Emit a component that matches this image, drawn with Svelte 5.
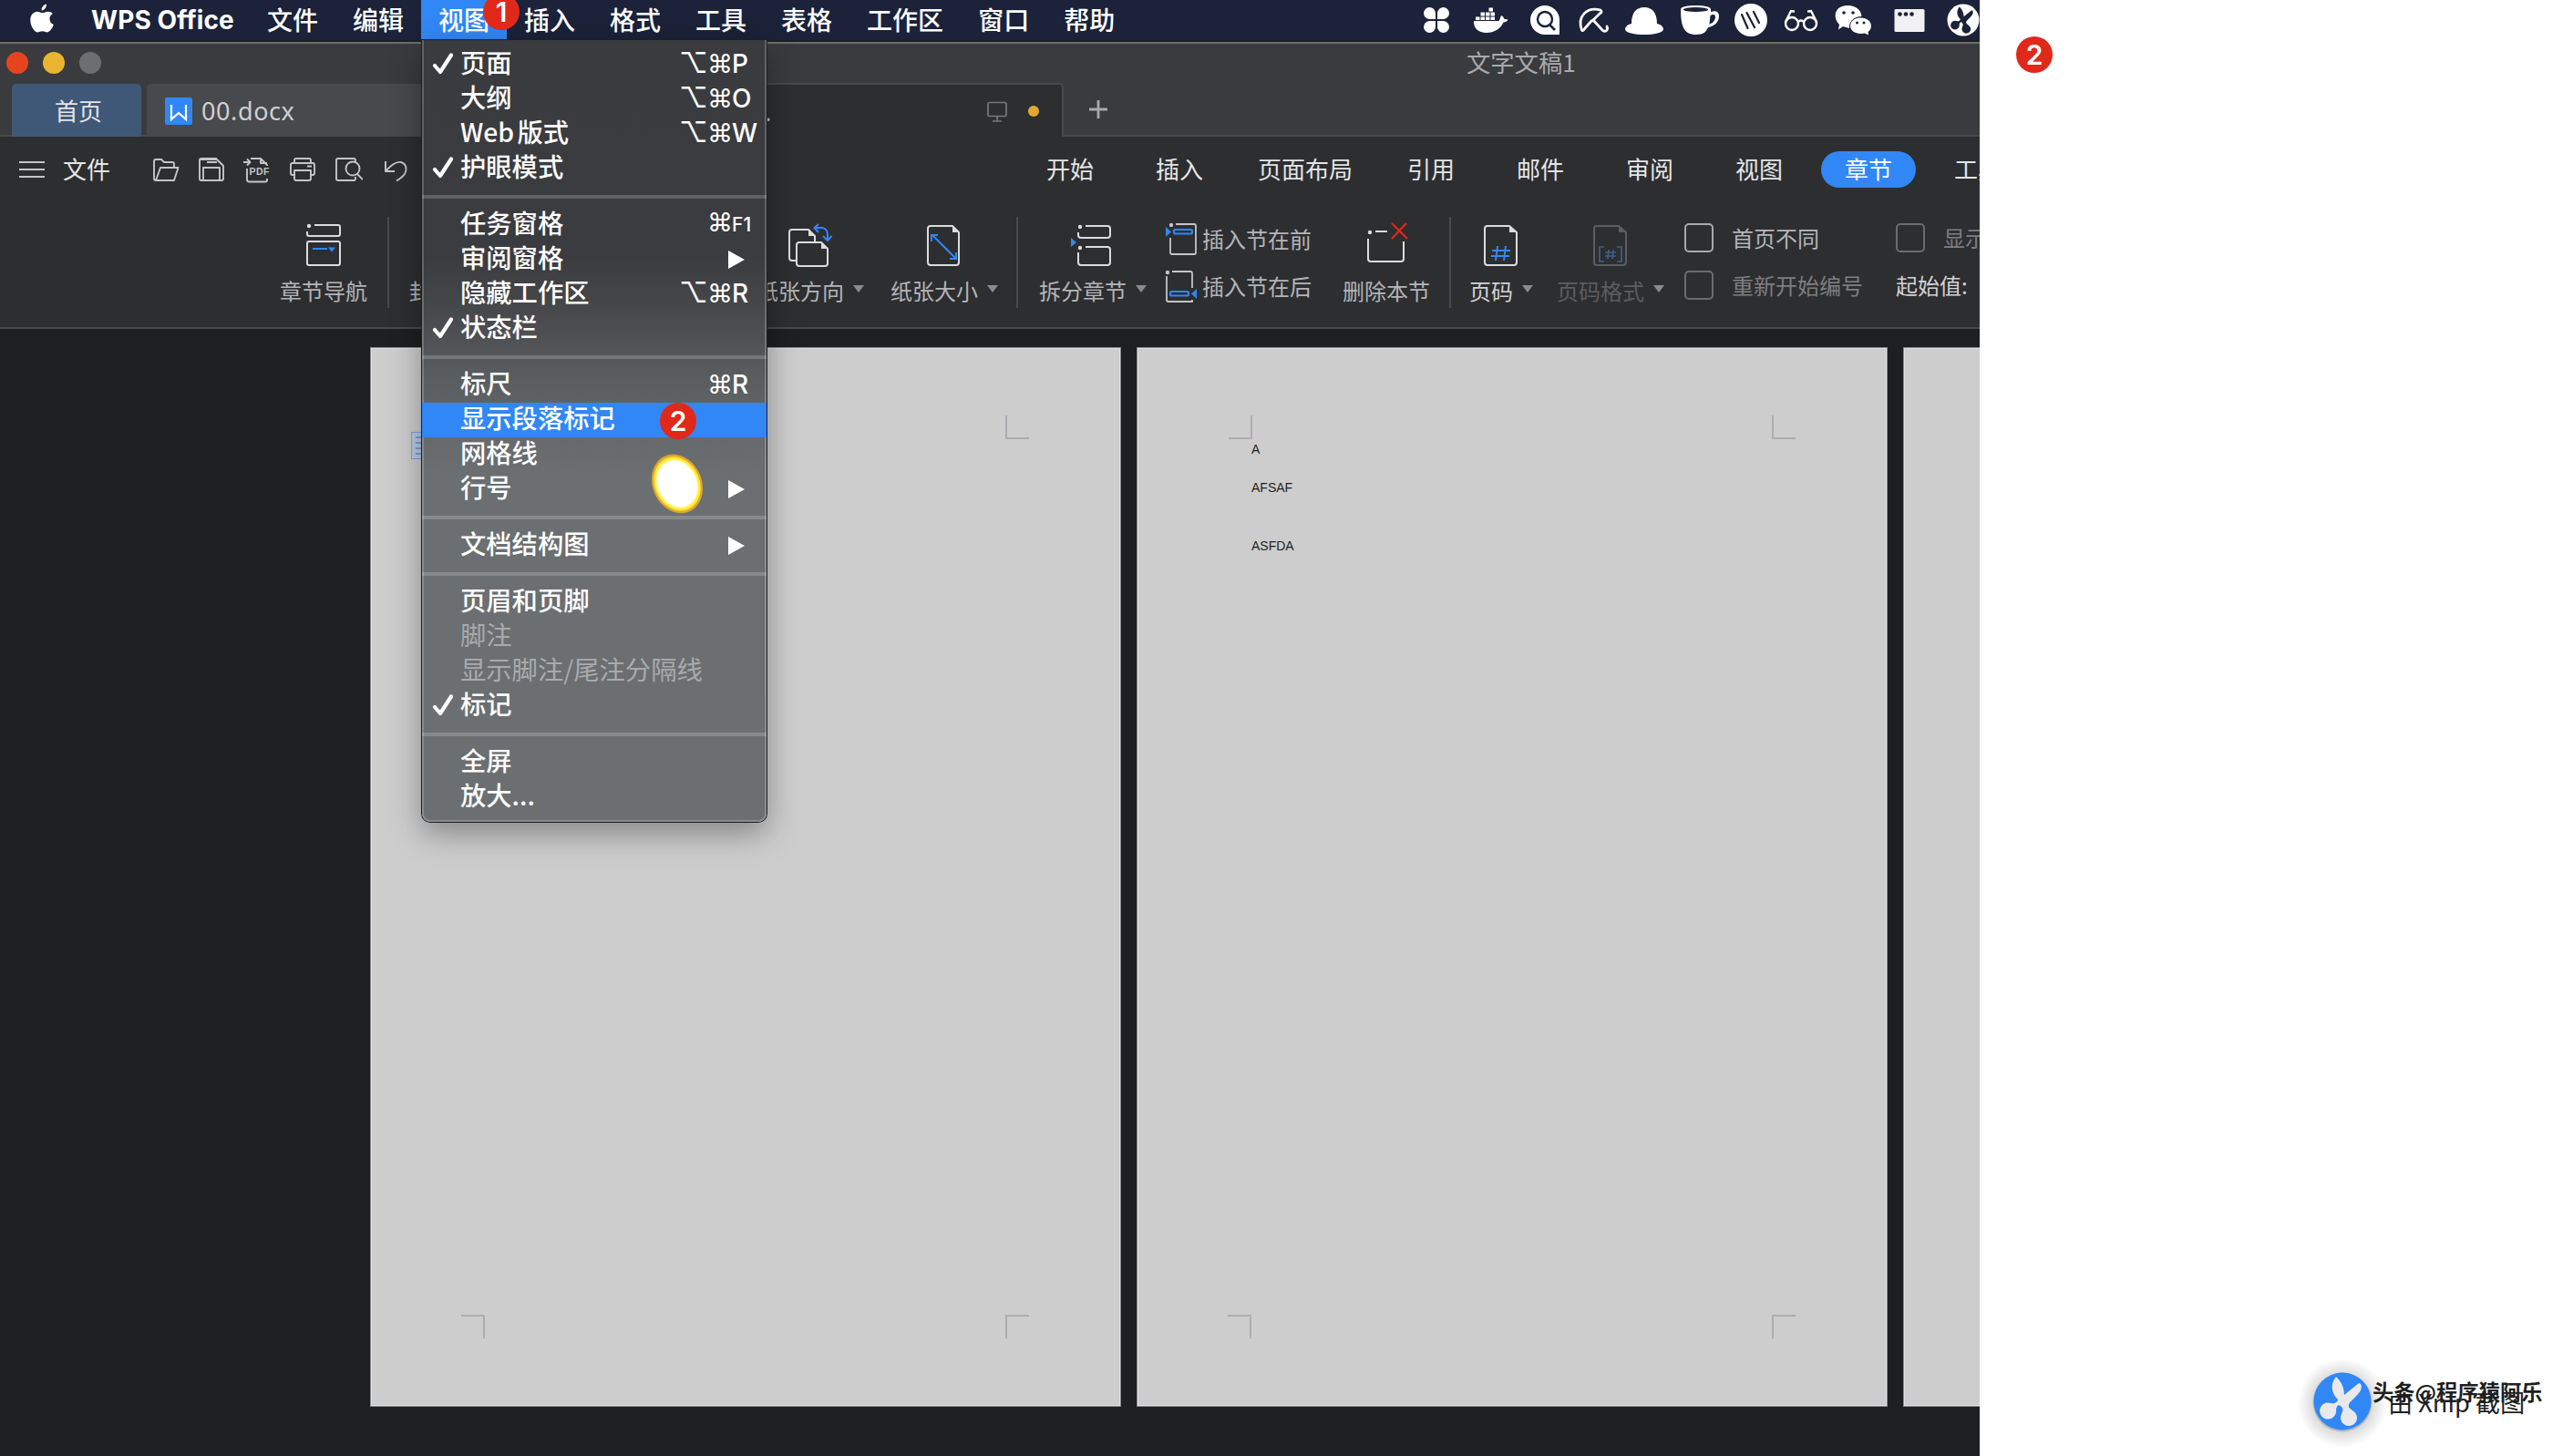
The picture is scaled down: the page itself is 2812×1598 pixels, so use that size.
<script>
  const menuTitles = ['文件', '编辑', '视图', '插入', '格式', '工具', '表格', '工作区', '窗口', '帮助'];

  const status = [
    { name: 'clover', gap: 0 },
    { name: 'docker', gap: 15.5 },
    { name: 'search', gap: 16 },
    { name: 'umbrella', gap: 10 },
    { name: 'hat', gap: 11 },
    { name: 'mug', gap: 17 },
    { name: 'stripes', gap: 12 },
    { name: 'glasses', gap: 11 },
    { name: 'chat', gap: 13 },
    { name: 'window', gap: 18 },
    { name: 'scissors', gap: 15 }
  ];

  const ribbonTabs = ['开始', '插入', '页面布局', '引用', '邮件', '审阅', '视图', '章节', '工具'];

  const menuGroups = [
    [
      { label: '页面', check: true, alt: true, key: 'P' },
      { label: '大纲', alt: true, key: 'O' },
      { label: 'Web 版式', web: true, alt: true, key: 'W' },
      { label: '护眼模式', check: true }
    ],
    [
      { label: '任务窗格', key: 'F1', small: true },
      { label: '审阅窗格', sub: true },
      { label: '隐藏工作区', alt: true, key: 'R' },
      { label: '状态栏', check: true }
    ],
    [
      { label: '标尺', key: 'R' },
      { label: '显示段落标记', active: true },
      { label: '网格线' },
      { label: '行号', sub: true }
    ],
    [{ label: '文档结构图', sub: true }],
    [
      { label: '页眉和页脚' },
      { label: '脚注', off: true },
      { label: '显示脚注/尾注分隔线', off: true },
      { label: '标记', check: true }
    ],
    [{ label: '全屏' }, { label: '放大...' }]
  ];
</script>

{#snippet scissorsShape()}
  <path d="M-7 -27 C-1 -22 2 -14 2 -7 L18 -20 C21 -20 23 -14 17 -8 C13 -3 7 1 7 4 C6 7 9 8 11 10 A9 9 0 1 1 -1 14 C1 10 1 7 -2 5 C-5 3 -6 5 -7 9 A9 9 0 1 1 -13 2 C-9 3 -5 1 -5 -2 C-12 -9 -14 -18 -7 -27 Z" />
{/snippet}

{#snippet statusIcon(name)}
  <svg class="status-icon" viewBox="0 0 44 44">
    {#if name === 'clover'}
      <path d="M21 21H14a6.5 6.5 0 1 1 7-7ZM23 21V14a6.5 6.5 0 1 1 7 7ZM21 23V30a6.5 6.5 0 1 1-7-7ZM23 23H30a6.5 6.5 0 1 1-7 7Z" fill="#fff" />
    {:else if name === 'docker'}
      <path d="M4 23H31.500C33 21 33 19 34 17c2 1 3 2 3.500 4 1.500-.3 3 0 4 .8-1 2-3 2.700-5 2.700C33 32 26 36 18 36 9 36 3.500 31 4 23Z" fill="#fff" />
      <path d="M6 18.500h4.500V22H6zM11.500 18.500H16V22h-4.500zM17 18.500h4.500V22H17zM22.500 18.500H27V22h-4.500zM11.500 13.500H16v4h-4.500zM17 13.500h4.500v4H17zM22.500 13.500H27v4h-4.500zM20.500 8.500H25v4h-4.500z" fill="#fff" />
    {:else if name === 'search'}
      <path d="M22 6a16 16 0 0 1 16 16V38H22A16 16 0 0 1 22 6Z" fill="#fff" />
      <circle cx="22" cy="21" r="8" fill="none" stroke="#1b2239" stroke-width="2.400" />
      <path d="M27 27L33 33" stroke="#1b2239" stroke-width="2.600" />
    {:else if name === 'umbrella'}
      <g fill="none" stroke="#fff" stroke-width="2.800" stroke-linejoin="round" stroke-linecap="round">
        <path d="M8.500 33C3 18 14 7 29 11C31 13 30 14 28 15L22 21Q21 23 19 23L12 31C10 34 9 34 8.500 33Z" />
        <path d="M21 22L31 33C34 36 38 33 36 29" />
      </g>
    {:else if name === 'hat'}
      <path d="M22 8C31 8 36 14 36 26C41 27 43 30 43 32C43 36 32 38 22 38C12 38 1 36 1 32C1 30 3 27 8 26C8 14 13 8 22 8Z" fill="#fff" />
    {:else if name === 'mug'}
      <path d="M1 10C1 4.500 34 4.500 34 10V13C41 11 43 14 43 18C43 24 38 29 31 30C29 35 26 38 18 38C4 38 1 28 1 10Z" fill="#fff" />
      <ellipse cx="17.500" cy="10.500" rx="13.500" ry="2.600" fill="#1b2239" />
      <path d="M33.500 17C38 14.500 40 17 38.500 21C37.500 24 35 26 32.500 26.500Z" fill="#1b2239" />
    {:else if name === 'stripes'}
      <circle cx="22" cy="22" r="18" fill="#fff" />
      <path d="M12 16L18.500 31M17.500 14L26 30M25 13L31 25" stroke="#1b2239" stroke-width="2.200" stroke-linecap="round" />
    {:else if name === 'glasses'}
      <g fill="none" stroke="#fff" stroke-width="2.400" stroke-linecap="round">
        <path d="M5 24L11 12L14 12.500M39 24L33 12L30 12.500M19.500 23.500Q22 21.500 24.500 23.500" />
        <circle cx="12" cy="26" r="7" /><circle cx="32" cy="26" r="7" />
      </g>
    {:else if name === 'chat'}
      <path d="M16 6C25 6 31 11 31.500 18C24 18 17 23 18 31L11 29L6 32.500L7 27C-1 19 2 6 16 6Z" fill="#fff" />
      <path d="M30 19.500C38 19.500 42 24 42 28.500C42 31.500 40.500 33.500 38.500 35L39 38.500L35 36.500C27 38 19 35 19 28.500C19 23.500 23.500 19.500 30 19.500Z" fill="#fff" />
      <circle cx="12" cy="14" r="1.800" fill="#1b2239" /><circle cx="22" cy="14" r="1.800" fill="#1b2239" />
      <circle cx="26.500" cy="25" r="1.500" fill="#1b2239" /><circle cx="34" cy="25" r="1.500" fill="#1b2239" />
    {:else if name === 'window'}
      <rect x="5.500" y="10" width="33" height="25" rx="1.500" fill="#f1f1f3" />
      <circle cx="11.500" cy="15.500" r="2.300" fill="#1b2239" /><circle cx="18" cy="15.500" r="2.300" fill="#1b2239" /><circle cx="24.500" cy="15.500" r="2.300" fill="#1b2239" />
    {:else}
      <circle cx="22" cy="22" r="17.500" fill="#fff" />
      <g transform="translate(21.500 22) scale(.54)" fill="#1b2239">{@render scissorsShape()}</g>
    {/if}
  </svg>
{/snippet}

{#snippet arrow()}
  <svg class="arrow" viewBox="0 0 12 8"><path d="M0 0H12L6 8Z" fill="#8a8b8e" /></svg>
{/snippet}

<div class="canvas">
  <div class="screen">
    <header class="menubar">
      <svg class="apple" viewBox="0 0 26 32"><path d="M18 0.500C18.300 4 15.500 7.500 12.600 7.600C12.300 4.200 15 1 18 .5ZM24.800 11C22.500 12.400 21.400 14.300 21.500 17C21.600 20 23.300 22 25.800 23.100C24.500 27 21.700 31.400 18.800 31.400C16.900 31.400 16 30.300 13.500 30.300C11 30.300 10 31.400 8.200 31.400C4.500 31.400 .3 24 .3 18.200C.3 12.200 4 8.800 7.800 8.800C10.300 8.800 11.800 10.200 13.600 10.200C15.300 10.200 17 8.700 19.900 8.700C21.900 8.700 23.700 9.500 24.800 11Z" fill="#fff" /></svg>
      <b class="app-name">WPS Office</b>
      <nav class="titles">
        {#each menuTitles as title}
          <span class="title" class:open={title === '视图'}>{title}</span>
        {/each}
      </nav>
      <div class="status">
        {#each status as s}
          <div style:margin-left="{s.gap}px">{@render statusIcon(s.name)}</div>
        {/each}
      </div>
    </header>

    <div class="titlebar">
      <div class="lights"><i class="red"></i><i class="yellow"></i><i class="grey"></i></div>
      <span class="doc-title">文字文稿1</span>
    </div>

    <div class="tabstrip">
      <div class="tab home">首页</div>
      <div class="tab file">
        <svg class="w-logo" viewBox="0 0 30 30"><rect width="30" height="30" rx="2" fill="#3187f5" /><path d="M7 8V24L15 17L23 24V8" fill="none" stroke="#fff" stroke-width="2.200" /></svg>
        <span>00.docx</span>
      </div>
      <div class="tab current">
        <span class="tail">.</span>
        <svg class="monitor" viewBox="0 0 24 24" fill="none" stroke="#77787b" stroke-width="1.700"><rect x="2" y="1.500" width="20" height="15" rx="1.500" /><path d="M12 17V22M7 22H17" /></svg>
        <i class="unsaved"></i>
      </div>
      <svg class="plus" viewBox="0 0 20 20"><path d="M10 0V20M0 10H20" stroke="#a9aaad" stroke-width="2.800" /></svg>
    </div>

    <div class="toolbar">
      <svg class="burger" viewBox="0 0 28 20"><path d="M0 2H28M0 10H28M0 18H28" stroke="#c4c5c7" stroke-width="1.800" /></svg>
      <span class="file-label">文件</span>
      <div class="quick">
        <svg viewBox="0 0 32 32"><path d="M5 28H25L29.500 14H10L5 28Q3 28 3 26V7Q3 5 5 5H11L14 8H23Q25 8 25 10V14" /></svg>
        <svg viewBox="0 0 32 32"><path d="M4 5H22L29 12V26Q29 28 27 28H5Q3 28 3 26V6Q3 4 5 4H22M7 28V14H25V28M11 8H22" /></svg>
        <svg viewBox="0 0 32 32"><path d="M1 8H8M5 4.500L8.500 8L5 11.500M9 4H20L27 11V12M20 4V9H27M5 15V27Q5 29.500 7.500 29.500H25Q27 29.500 27 27.500V26" /><text x="7.500" y="22" class="pdf">PDF</text></svg>
        <svg viewBox="0 0 32 32"><path d="M8 22H5Q3 22 3 20V11Q3 9 5 9H27Q29 9 29 11V20Q29 22 27 22H25M7 9V6Q7 4 9 4H23Q25 4 25 6V9M8 17H25V26Q25 28 23 28H9Q7 28 7 26V17ZM21 12.500H26" /></svg>
        <svg viewBox="0 0 32 32"><path d="M24 8V6Q24 4 22 4H5Q3 4 3 6V26Q3 28 5 28H22Q24 28 24 26V24M26 21L32 27" /><circle cx="21" cy="15" r="7.500" /></svg>
        <svg viewBox="0 0 32 32"><path d="M7 7V18H17M7 18C14 10 19 7 24 8C30 10 31 16 28 21C26 24 23 26 19 28.500" /></svg>
      </div>
      <nav class="rtabs">
        {#each ribbonTabs as t}
          <span class="rtab"><span class:pill={t === '章节'}>{t}</span></span>
        {/each}
      </nav>
    </div>

    <div class="ribbon">
      <div class="tool nav-tool">
        <svg class="icon" viewBox="0 0 52 52"><g class="line"><path d="M16 4H42Q44 4 44 6V14Q44 16 42 16H10Q8 16 8 14V11" /><rect x="8" y="22" width="36" height="26" rx="2" /></g><circle cx="10" cy="5" r="2.200" fill="#dcdcde" /><path d="M14 30H30M33 29.500h4l-2 2.500z" stroke="#3187f5" stroke-width="2" fill="#3187f5" /></svg>
        <div class="label">章节导航</div>
      </div>
      <i class="sep s1"></i>
      <div class="tool cover"><div class="icon"></div><div class="label">封面页</div></div>
      <div class="tool orient">
        <svg class="icon" viewBox="0 0 52 52"><g class="line"><path d="M11 43H6Q3 43 3 40V12Q3 9 6 9H24L31 16V22" /><path d="M14 23H38L45 30V46Q45 49 42 49H14Q11 49 11 46V26Q11 23 14 23Z" /></g><path d="M24 9V16H31ZM38 23V30H45Z" fill="#dcdcde" /><path d="M30 7H39Q45 8 45 15V20M35 3L30.500 7L35 12M40 16L45 21L49.500 16" fill="none" stroke="#3187f5" stroke-width="2" /></svg>
        <div class="label">纸张方向{@render arrow()}</div>
      </div>
      <div class="tool size">
        <svg class="icon" viewBox="0 0 52 52"><path class="line" d="M11 5H35L42 12V45Q42 48 39 48H11Q8 48 8 45V8Q8 5 11 5Z" /><path d="M35 5V12H42Z" fill="#dcdcde" /><path d="M13 15L39 41M12 22V15H19M39 34V41H32" fill="none" stroke="#3187f5" stroke-width="2" /></svg>
        <div class="label">纸张大小{@render arrow()}</div>
      </div>
      <i class="sep s2"></i>
      <div class="tool split">
        <svg class="icon" viewBox="0 0 52 52"><g class="line"><path d="M18 5H42Q45 5 45 8V15Q45 18 42 18H13Q10 18 10 15V12" /><path d="M18 28H42Q45 28 45 31V45Q45 48 42 48H13Q10 48 10 45V34" /></g><circle cx="12" cy="6" r="2.200" fill="#dcdcde" /><circle cx="12" cy="29" r="2.200" fill="#dcdcde" /><path d="M2 18L8 23L2 28Z" fill="#3187f5" /></svg>
        <div class="label">拆分章节{@render arrow()}</div>
      </div>
      <div class="stack inserts">
        <div class="row">
          <svg class="mini" viewBox="0 0 36 36"><path class="thin" d="M12 2H32Q34 2 34 4V33Q34 35 32 35H8Q6 35 6 33V17" /><circle cx="7" cy="3" r="2.200" fill="#c4c5c7" /><rect x="10" y="8" width="20" height="4.500" rx="1.500" fill="none" stroke="#3187f5" stroke-width="2.200" /><path d="M1 5L7 10.500L1 16Z" fill="#3187f5" /></svg>
          <span>插入节在前</span>
        </div>
        <div class="row">
          <svg class="mini" viewBox="0 0 36 36"><path class="thin" d="M8 2H28Q30 2 30 4V20M2 7V33Q2 35 4 35H30V33" /><circle cx="3" cy="3" r="2.200" fill="#c4c5c7" /><rect x="6" y="24" width="20" height="4.500" rx="1.500" fill="none" stroke="#3187f5" stroke-width="2.200" /><path d="M35 21L29 26.500L35 32Z" fill="#3187f5" /></svg>
          <span>插入节在后</span>
        </div>
      </div>
      <div class="tool delete">
        <svg class="icon" viewBox="0 0 52 52"><path class="line" d="M14 11H27M6 19V41Q6 44 9 44H42Q45 44 45 41V22" /><circle cx="8" cy="12" r="2.200" fill="#dcdcde" /><path d="M32 2L49 19M48 2L32 19" stroke="#e0281b" stroke-width="2.200" /></svg>
        <div class="label">删除本节</div>
      </div>
      <i class="sep s3"></i>
      <div class="tool pageno">
        <svg class="icon" viewBox="0 0 52 52"><path class="line" d="M11 5H35L43 12V45Q43 48 40 48H11Q8 48 8 45V8Q8 5 11 5Z" /><path d="M35 5V12H43Z" fill="#dcdcde" /><path d="M22 27L20 43M31 27L29 43M16 32H36M15 38H35" stroke="#3187f5" stroke-width="2" /></svg>
        <div class="label bright">页码{@render arrow()}</div>
      </div>
      <div class="tool pagefmt">
        <svg class="icon" viewBox="0 0 52 52"><path d="M11 5H35L43 12V45Q43 48 40 48H11Q8 48 8 45V8Q8 5 11 5Z" fill="none" stroke="#5c5d60" stroke-width="2" /><path d="M35 5V12H43Z" fill="#5c5d60" /><path d="M19 28H14V44H19M33 28H38V44H33M24 31L23 41M29 31L28 41M20 34H32M20 38H32" fill="none" stroke="#3f5f8c" stroke-width="1.700" /></svg>
        <div class="label off">页码格式{@render arrow()}</div>
      </div>
      <div class="stack checks">
        <div class="row"><i class="box on"></i><span>首页不同</span></div>
        <div class="row off2"><i class="box"></i><span>重新开始编号</span></div>
      </div>
      <div class="stack extra">
        <div class="row off2"><i class="box"></i><span>显示</span></div>
        <div class="row"><span class="start">起始值:</span></div>
      </div>
    </div>

    <main class="workspace">
      <section class="page"><i class="mark tl"></i><i class="mark tr"></i><i class="mark bl"></i><i class="mark br"></i>
        <svg class="para-tool" viewBox="0 0 24 30"><rect x=".5" y=".5" width="23" height="29" fill="#b9c9e6" stroke="#7fa3dc" /><path d="M5 6H20M5 12H20M5 18H20M5 24H20" stroke="#6f8fc4" stroke-width="1.500" /></svg>
      </section>
      <section class="page"><i class="mark tl"></i><i class="mark tr"></i><i class="mark bl"></i><i class="mark br"></i>
        <p class="p1">A</p><p class="p2">AFSAF</p><p class="p3">ASFDA</p>
      </section>
      <section class="page"></section>
    </main>

    <div class="dropdown">
      {#each menuGroups as group}
        <div class="group">
          {#each group as item}
            <div class="item" class:active={item.active} class:disabled={item.off}>
              <span class="check">
                {#if item.check}<svg viewBox="0 0 24 24"><path d="M3 14L9 21L21 2.500" fill="none" stroke="#fff" stroke-width="4.200" stroke-linecap="round" stroke-linejoin="round" /></svg>{/if}
              </span>
              <span class="text" class:web={item.web}>{item.label}</span>
              {#if item.key}
                <span class="keys"><span class="alt">{item.alt ? '⌥' : ''}</span><span class="cmd">⌘</span><span class="letter" class:small={item.small}>{item.key}</span></span>
              {:else if item.sub}
                <svg class="sub" viewBox="0 0 18 20"><path d="M0 0L18 10L0 20Z" fill="#fff" /></svg>
              {/if}
            </div>
          {/each}
        </div>
      {/each}
    </div>

    <svg class="glow" viewBox="0 0 70 76">
      <defs><radialGradient id="flare"><stop offset="0" stop-color="#fff" /><stop offset=".73" stop-color="#fff" /><stop offset=".79" stop-color="#fff8a0" /><stop offset=".83" stop-color="#ffee30" /><stop offset=".88" stop-color="#ffe530" /><stop offset=".91" stop-color="#e3a92f" /><stop offset=".95" stop-color="#e3a92f" /><stop offset="1" stop-color="#e3a92f" stop-opacity="0" /></radialGradient></defs>
      <ellipse cx="35" cy="38" rx="27.500" ry="34" transform="rotate(-24 35 38)" fill="url(#flare)" />
    </svg>
    <b class="badge b1">1</b>
    <b class="badge b2">2</b>
  </div>

  <b class="badge b3">2</b>

  <div class="watermark">
    <svg class="xnip" viewBox="-52 -52 104 104">
      <defs><radialGradient id="halo"><stop offset=".6" stop-color="#000" stop-opacity=".16" /><stop offset="1" stop-color="#000" stop-opacity="0" /></radialGradient></defs>
      <circle r="49" cy="2" fill="url(#halo)" /><circle r="32.500" cy="1" fill="#b9babc" /><circle r="31.500" fill="#3187f5" />
      <g fill="#e9e9eb">{@render scissorsShape()}</g>
    </svg>
    <span class="xnip-text">由 Xnip 截图</span>
    <b class="credit">头条@程序猿阿乐</b>
  </div>
</div>

<style>
  :global(body) { margin: 0; background: #fff; }
  .canvas { position: relative; width: 2812px; height: 1598px; overflow: hidden; background: #fff; font-family: Inter, 'Noto Sans CJK SC', sans-serif; }
  .canvas :global(svg) { display: block; flex: none; }
  .screen { position: relative; width: 2172px; height: 1598px; overflow: hidden; background: #1e1f21; display: flex; flex-direction: column; }
  .screen > * { flex: none; }

  .menubar { height: 44px; background: #1b2239; display: flex; align-items: center; color: #fff; font-size: 28px; white-space: nowrap; }
  .menubar > * { flex: none; }
  .apple { width: 26px; height: 32px; margin: 0 0 5px 33px; }
  .app-name { width: 174px; margin-left: 41px; font-size: 28px; font-weight: 700; letter-spacing: .1px; }
  .titles { display: flex; height: 44px; line-height: 43px; font-family: 'Noto Sans CJK SC', sans-serif; font-weight: 500; }
  .title { padding: 0 19px; }
  .open { background: #3187f5; }
  .status { display: flex; margin: 0 -4px 0 auto; }
  .status-icon { width: 44px; height: 44px; }

  .titlebar { height: 44px; border-top: 2px solid #6b6f71; box-sizing: border-box; margin-top: 2px; background: #3a3b3e; display: flex; align-items: center; font-family: 'Noto Sans CJK SC', sans-serif; }
  .lights { display: flex; gap: 16px; margin-left: 7px; width: 1602px; }
  .lights i { width: 24px; height: 24px; border-radius: 50%; }
  .red { background: #e8431f; }
  .yellow { background: #e9b531; }
  .grey { background: #6b6f71; }
  .doc-title { font-size: 26.300px; line-height: 26px; color: #a9aaad; margin-top: -3px; }

  .tabstrip { height: 60px; box-sizing: border-box; background: #3a3b3e; border-bottom: 2px solid #48494c; display: flex; align-items: flex-start; font-family: 'Noto Sans CJK SC', sans-serif; }
  .tab { box-sizing: border-box; flex: none; height: 58px; margin-top: 2px; border-radius: 5px 5px 0 0; display: flex; align-items: center; }
  .home { width: 142px; margin-left: 13px; background: #3f5877; color: #e4e5e7; font-size: 26px; justify-content: center; padding: 0 0 2px 4px; }
  .file { width: 330px; height: 56px; margin-left: 6px; background: #48494c; color: #cfd0d2; padding: 4px 0 0 20px; font-size: 27px; }
  .file span { margin: 0 0 1px 10px; font-family: 'Noto Sans', sans-serif; letter-spacing: .6px; }
  .w-logo { width: 30px; height: 30px; }
  .current { width: 676px; height: 60px; margin: 1px 0 -1px 0; background: #2d2e30; border: 2px solid #48494c; border-bottom: 0; padding-left: 346px; }
  .tail { width: 243px; color: #c4c5c7; font-size: 26px; line-height: 40px; }
  .monitor { width: 24px; height: 24px; margin-top: 2px; }
  .unsaved { width: 12px; height: 12px; border-radius: 50%; background: #e3a92f; margin-left: 22px; }
  .plus { width: 20px; height: 20px; margin: 20px 0 0 28px; }

  .toolbar { height: 72px; background: #2d2e30; display: flex; align-items: center; font-family: 'Noto Sans CJK SC', sans-serif; font-size: 26px; color: #e4e5e7; white-space: nowrap; line-height: 30px; }
  .toolbar > * { flex: none; }
  .burger { width: 28px; height: 20px; margin: 0 0 0 21px; }
  .file-label { margin: -3px 0 0 20px; width: 97px; }
  .quick { display: flex; gap: 18px; width: 948px; }
  .quick svg { width: 32px; height: 32px; fill: none; stroke: #c4c5c7; stroke-width: 1.9; stroke-linejoin: round; }
  .quick svg .pdf { fill: #c4c5c7; stroke: none; font: 700 10.5px 'Liberation Sans', sans-serif; letter-spacing: .4px; }
  .rtabs { display: flex; margin-top: -2px; }
  .rtab { flex: none; width: 120px; display: flex; justify-content: center; }
  .rtab:nth-child(3) { width: 156px; }
  .pill { background: #3187f5; color: #fff; border-radius: 20px; width: 104px; height: 40px; line-height: 38px; margin: -4px 0 -6px; text-align: center; }

  .ribbon { height: 139px; box-sizing: border-box; border-bottom: 2px solid #48494c; background: #2d2e30; display: flex; align-items: flex-start; font-family: 'Noto Sans CJK SC', sans-serif; font-size: 24px; color: #b4b5b8; white-space: nowrap; }
  .ribbon > * { flex: none; }
  .tool { display: flex; flex-direction: column; align-items: center; padding-top: 21px; }
  .icon { width: 52px; height: 52px; }
  .line { fill: none; stroke: #dcdcde; stroke-width: 2; stroke-linejoin: round; }
  .thin { fill: none; stroke: #c4c5c7; stroke-width: 1.8; }
  .label { display: flex; align-items: center; height: 36px; line-height: 36px; margin-top: 6px; }
  .arrow { width: 12px; height: 8px; margin: -4px 0 0 10px; }
  .bright { color: #d2d3d5; }
  .off { color: #5c5d60; }
  .off2 { color: #7d7e81; }
  .sep { width: 2px; height: 100px; margin-top: 16px; background: #48494c; }
  .nav-tool { width: 96px; margin-left: 307px; }
  .s1 { margin-left: 22px; }
  .cover { width: 72px; margin-left: 22px; }
  .orient { width: 118px; margin-left: 309px; }
  .size { width: 118px; margin-left: 29px; }
  .s2 { margin-left: 20px; }
  .split { width: 118px; margin-left: 23px; }
  .stack { display: flex; flex-direction: column; gap: 16px; padding-top: 22px; }
  .row { display: flex; align-items: center; height: 36px; line-height: 36px; }
  .inserts { width: 160px; margin-left: 20px; }
  .mini { width: 36px; height: 36px; margin-right: 5px; }
  .delete { width: 96px; margin-left: 35px; }
  .s3 { margin-left: 21px; }
  .pageno { width: 70px; margin-left: 20px; }
  .pagefmt { width: 118px; margin-left: 26px; }
  .checks { width: 232px; margin-left: 22px; padding-top: 21px; }
  .extra { width: 120px; padding-top: 21px; }
  .box { box-sizing: border-box; width: 32px; height: 32px; border: 2px solid #6b6c6f; border-radius: 5px; margin-right: 20px; }
  .on { border-color: #a9aaad; }
  .start { color: #d2d3d5; }

  .workspace { display: flex; gap: 17px; padding: 20px 0 0 406px; height: 1163px; }
  .page { position: relative; flex: none; box-sizing: border-box; width: 824px; height: 1163px; background: #cdcdce; border: 1px solid #8a8b8e; box-shadow: inset 0 0 0 1px #e0e0e2; }
  .mark { position: absolute; width: 24px; height: 24px; border: 0 solid #acacb1; }
  .tl { left: 100px; top: 74px; border-width: 0 2px 2px 0; }
  .tr { left: 696px; top: 74px; border-width: 0 0 2px 2px; }
  .bl { left: 99px; top: 1061px; border-width: 2px 2px 0 0; }
  .br { left: 696px; top: 1061px; border-width: 2px 0 0 2px; }
  .para-tool { position: absolute; left: 44px; top: 92px; width: 24px; height: 30px; }
  .page p { margin: 0 0 0 125px; font: 14px/16px 'Liberation Sans', sans-serif; color: #1e1f21; }
  .page .p1 { padding-top: 103px; }
  .page .p2 { padding-top: 26px; }
  .page .p3 { padding-top: 48px; }

  .dropdown { position: absolute; left: 463px; top: 44px; width: 378px; height: 858px; box-sizing: border-box; padding-top: 8px; border: 2px solid rgba(255, 255, 255, .2); border-top: 0; border-radius: 0 0 9px 9px; box-shadow: 0 0 0 1px #1e1f21, 0 12px 34px rgba(0, 0, 0, .36); background: linear-gradient(#3a3b3e 0, #3b3c3f 240px, #48494c 300px, #5a5d60 370px, #66696c 430px, #6b6f71 480px); background-origin: border-box; color: #fff; font: 500 28.300px/36px 'Noto Sans CJK SC', sans-serif; white-space: nowrap; }
  .group + .group::before { content: ''; display: block; height: 4px; margin: 10px -2px; background: rgba(255, 255, 255, .19); }
  .item { height: 38px; display: flex; align-items: center; }
  .active { background: #3187f5; margin: 0 -2px; padding: 0 2px; }
  .disabled { color: #a9aaad; font-weight: 400; }
  .check { width: 40px; height: 24px; margin-top: -2px; }
  .check svg { width: 24px; height: 24px; margin-left: 9px; }
  .text { flex: 1; margin-top: -6px; }
  .web { word-spacing: -3px; }
  .keys { display: flex; flex: none; width: 94px; margin-top: -2px; align-items: baseline; font-family: Inter, sans-serif; font-size: 28px; }
  .alt, .cmd { font: 28px/34px Inter, 'DejaVu Sans', sans-serif; }
  .alt { width: 31px; font-size: 31px; line-height: 30px; }
  .cmd { width: 27px; }
  .small { font-size: 21px; }
  .sub { width: 18px; height: 20px; margin-right: 22px; }

  .glow { position: absolute; left: 708px; top: 493px; width: 70px; height: 76px; }
  .badge { position: absolute; width: 40px; height: 40px; border-radius: 50%; background: #e0281b; color: #fff; font: 600 30px/41px Inter, sans-serif; text-align: center; }
  .b1 { left: 530px; top: -7px; }
  .b2 { left: 724px; top: 442px; }
  .b3 { left: 2212px; top: 40px; }

  .watermark { position: absolute; left: 2518px; top: 1486px; width: 290px; height: 104px; color: #1e1f21; white-space: nowrap; font-family: 'Noto Sans CJK SC', sans-serif; }
  .xnip { width: 104px; height: 104px; }
  .xnip-text { position: absolute; left: 102px; top: 34px; font-size: 27.200px; line-height: 36px; }
  .credit { position: absolute; left: 85px; top: 24px; font-size: 23.300px; line-height: 34px; }
</style>
